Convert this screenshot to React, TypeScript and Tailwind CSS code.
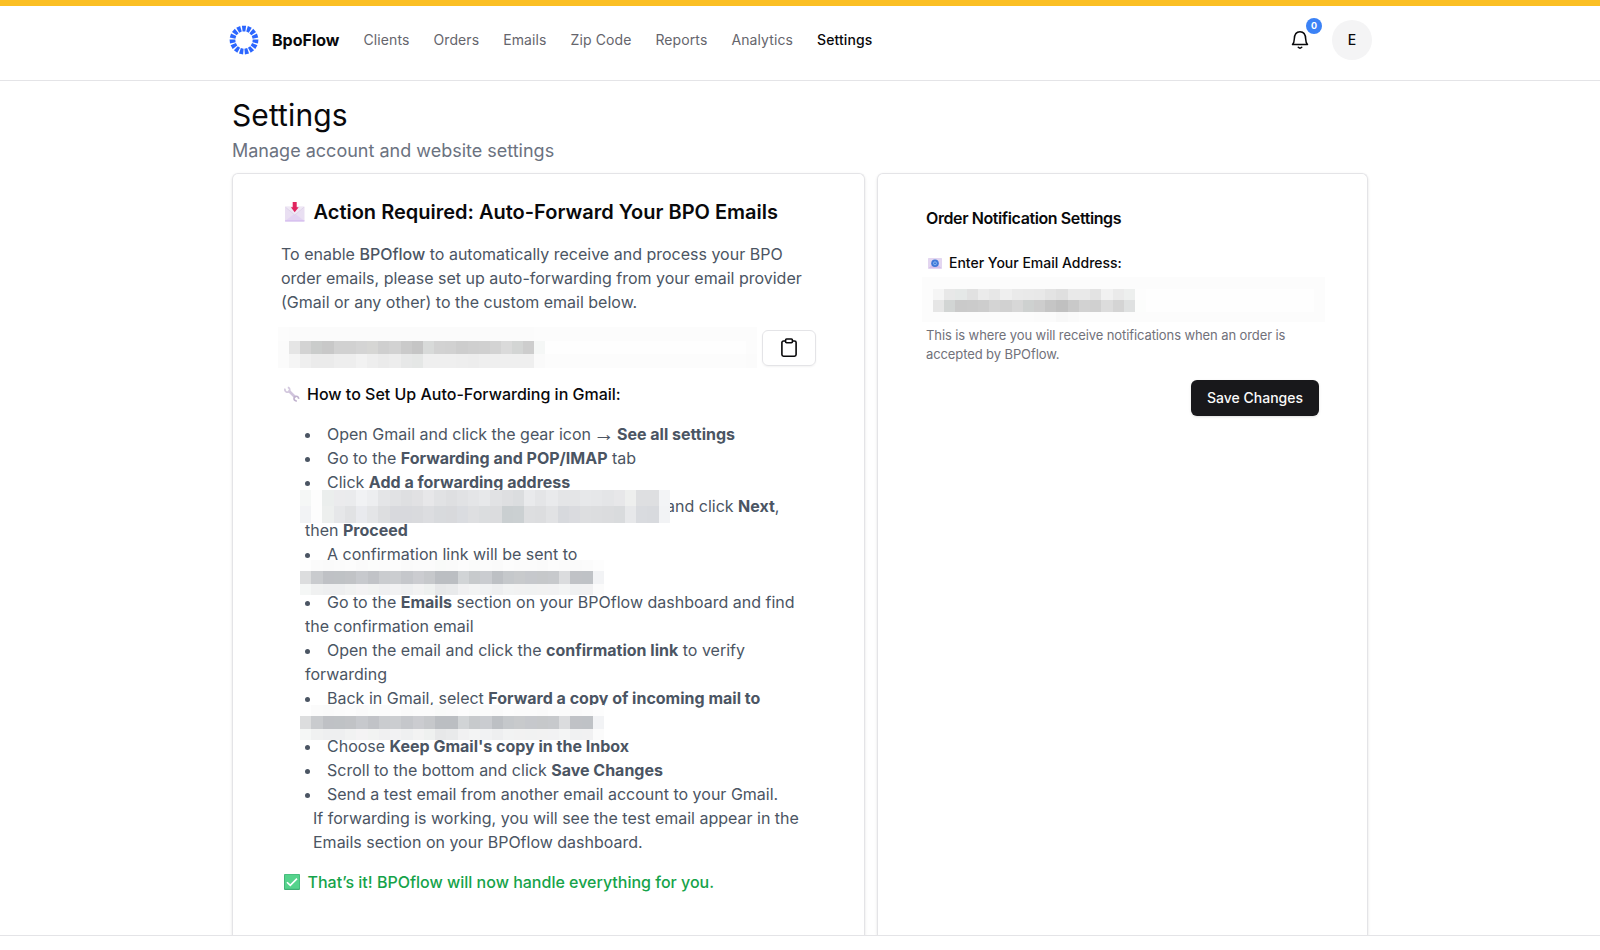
import React from "react";

type Cells = { w: number[]; rows: { h: number; c: string[] }[] };

function Mosaic({ data }: { data: Cells }) {
  return (
    <div className="flex flex-col" aria-hidden="true">
      {data.rows.map((r, i) => (
        <div key={i} className="flex" style={{ height: r.h }}>
          {r.c.map((c, j) => (
            <div key={j} className="shrink-0" style={{ width: data.w[j], backgroundColor: "#" + c }} />
          ))}
        </div>
      ))}
    </div>
  );
}

const fill = (n: number, v: number) => Array.from({ length: n }, () => v);

const forwardAddress: Cells = {
  w: [11, ...fill(22, 11.16), 11, 201, 11],
  rows: [
    { h: 14, c: ["fcfcfc", ...Array(22).fill("fbfbfb"), "fcfcfc", "fcfcfc", "fcfcfc"] },
    { h: 13, c: ["fbfbfb", "e5e5e5", "d3d3d3", "cacccb", "c8c8c8", "d1d1d1", "d1d1d1", "d4d4d4", "d6d6d4", "cfcfcf", "d2d2d2", "cacaca", "c5c5c5", "d8dad9", "d2d2d2", "d1d1d1", "cdcdcd", "cfcfcf", "d0d0d0", "d3d3d3", "dadada", "d3d5d4", "cdcdcd", "f5f7f6", "fefefe", "fcfcfc"] },
    { h: 14, c: ["fbfbfb", "f5f5f5", "efefef", "ebebeb", "ebebeb", "eeeeee", "eeeeee", "f2f2f2", "eeeeee", "ebebeb", "ededed", "e7e8e8", "e5e7e6", "efefef", "efefef", "efefef", "eeeeee", "ededed", "efefef", "efefef", "efefef", "efefef", "efefef", "fafafa", "fcfcfc", "fbfbfb"] },
  ],
};

const pasteAddress: Cells = {
  w: fill(33, 11.21),
  rows: [
    { h: 16, c: ["f5f7f6", "fdfdfd", "ebeeed", "ebebed", "eaebed", "f1f2f4", "edeef0", "e4e5e7", "e1e2e4", "dedfe1", "e1e1e3", "e7e7e9", "e1e2e4", "dedfe1", "e1e2e4", "e4e5e7", "e7e8ea", "e1e2e4", "dedfe1", "dbdddf", "e9eaec", "e4e5e7", "e9eaec", "e4e5e7", "e4e5e7", "e7e8ea", "e6e7e9", "e4e5e7", "e7e7e9", "eeefee", "dedfe1", "dedfe1", "f3f4f6"] },
    { h: 16.6, c: ["f2f3f5", "fdfdfd", "edefee", "e6e7e9", "e1e2e4", "e9eaee", "e4e5e7", "dddee0", "d8d9dd", "d8d9dd", "d9dadd", "dcdde0", "d8dadd", "d8d9dc", "dadce0", "dedfe1", "dbdddf", "dbdcde", "cacfd1", "cbd0d2", "dddee0", "dcdddf", "e1e2e4", "d7d9dd", "dadbdf", "dddee0", "dcdddf", "dbdcde", "d9dbdd", "e7e8ea", "d9dbdf", "d8dade", "f2f3f5"] },
  ],
};

const shortAddress: Cells = {
  w: fill(27, 11.28),
  rows: [
    { h: 11, c: ["fefefe", "fbfbfb", "fafafa", "fbfbfb", "fcfcfc", "fafafa", "fbfcfb", "fbfbfb", "fcfcfc", "fafafa", "fbfbfb", "fbfbfb", "f9faf9", "fafafa", "fcfcfc", "fafbfa", "fbfbfb", "fafafa", "fcfcfc", "fbfbfb", "fbfbfb", "fafafa", "fcfcfc", "fbfbfb", "fafafa", "fbfbfb", "fdfdfd"] },
    { h: 13, c: ["dcddde", "c9cbce", "bfc1c5", "bfc2c5", "c1c3c6", "c7c9cd", "c1c3c7", "cacccf", "cbcdd0", "c5c7cb", "cbccd0", "c6c8cb", "bbbec2", "bbbec2", "d1d4d6", "c7cacc", "caccd0", "bdc0c4", "c5c8cb", "c8cacc", "c6c8cc", "c6c8ca", "c7c9cc", "dbdcde", "c0c2c6", "bfc2c6", "f2f3f5"] },
    { h: 11, c: ["f5f7f6", "f0f1f1", "eeeff0", "eeeff0", "f1f2f2", "f4f3f4", "f2f3f2", "f0f0f1", "f2f2f3", "eff0f1", "f3f3f3", "eff1f0", "e7e8e9", "e9eaeb", "f1f1f2", "f3f4f4", "f1f2f3", "eeeff0", "f2f3f3", "f2f2f2", "f1f2f2", "f2f2f2", "f2f2f3", "f4f5f5", "f0f1f2", "f1f1f2", "fbfbfb"] },
  ],
};

const notifyAddress: Cells = {
  w: [11, ...fill(18, 11.22), 11, 168, 11],
  rows: [
    { h: 12, c: Array(22).fill("fcfcfc") },
    { h: 11, c: ["fcfcfc", "f5f5f5", "e8e8e8", "e5e8e7", "e1e1e1", "ebebeb", "e7e7e7", "efefef", "eaeaea", "e9e9e9", "e8e8e8", "e3e3e3", "dfdfdf", "e9e9e9", "e9e9e9", "e3e3e3", "f1f1f1", "eaeaea", "edefee", "fdfdfd", "fefefe", "fcfcfc"] },
    { h: 12, c: ["fcfcfc", "e6e6e6", "d2d5d4", "cacaca", "cbcbcb", "cdcdcd", "d4d4d4", "d1d1d1", "d7d7d7", "ced1d0", "cdcdcd", "c5c5c5", "c0c0c0", "c9c9c9", "d2d2d2", "d0d0d0", "dcdcdc", "d4d4d4", "dfe1e1", "fcfdfc", "fefefe", "fcfcfc"] },
    { h: 10, c: ["fcfcfc", "fcfcfc", "fcfcfc", "fcfcfc", "fcfcfc", "fcfcfc", "fcfcfc", "fcfcfc", "fcfcfc", "fcfcfc", "fbfbfb", "fbfbfb", "f8f8f8", "fafafa", "fcfcfc", "fcfcfc", "fcfcfc", "fcfcfc", "fcfcfc", "fcfcfc", "fcfcfc", "fcfcfc"] },
  ],
};

function Logo() {
  return (
    <svg width="30" height="30" viewBox="-15 -15 30 30">
      {Array.from({ length: 15 }, (_, i) => (
        <path key={i} d="M-2.1-14.3H2.1L1.4-8.6H-1.4Z" fill="#2b66ff" transform={`rotate(${i * 24})`} />
      ))}
    </svg>
  );
}

function InboxEmoji() {
  return (
    <svg width="20" height="20" viewBox="0 0 20 20" className="shrink-0">
      <rect x="0" y="4.5" width="19.5" height="15" rx="1" fill="#e9dff2" />
      <path d="M0 19l9.8-7.5L19.5 19z" fill="#e2d3f2" />
      <path d="M.3 5l9.5 8 9.4-8" fill="#efe8f5" stroke="#d8cbe4" strokeWidth=".6" />
      <path d="M0 18.4h19.5v1.1H0z" fill="#d3b8ee" />
      <path d="M7.7 0h4v5.3h2L9.7 10.2 5.9 5.3h1.8z" fill="#e0245e" />
    </svg>
  );
}

function WrenchEmoji() {
  return (
    <svg width="16" height="16" viewBox="0 0 16 16" className="shrink-0">
      <path d="M4.5 4.5l7 7" stroke="#d0c4dc" strokeWidth="2.7" />
      <path d="M1.2 2.6A2.4 2.4 0 1 0 3.8 1.4" fill="none" stroke="#d3c8de" strokeWidth="1.7" />
      <path d="M14.6 12.8a2.3 2.3 0 1 0-1.8 2" fill="none" stroke="#c0b2ce" strokeWidth="1.7" />
    </svg>
  );
}

function MailEmoji() {
  return (
    <svg width="14" height="11" viewBox="0 0 14 11" className="shrink-0">
      <rect width="14" height="10.5" rx=".6" fill="#e3d6f0" />
      <path d="M0 10.5L5 6h4l5 4.5z" fill="#d5c0ea" />
      <circle cx="7" cy="5.3" r="3.8" fill="#3f79d8" />
      <circle cx="7" cy="5.3" r="1.5" fill="none" stroke="#9cc4f5" strokeWidth=".8" />
    </svg>
  );
}

function CheckEmoji() {
  return (
    <svg width="16" height="16" viewBox="0 0 16 16" className="shrink-0">
      <rect width="16" height="16" rx="1" fill="#3fae74" />
      <rect x=".8" y=".6" width="14.6" height="14.2" rx=".6" fill="#55d38c" />
      <path d="M3 8.2l3.3 3.2L13 4.6" fill="none" stroke="#fff" strokeWidth="1.6" />
    </svg>
  );
}

const links = ["Clients", "Orders", "Emails", "Zip Code", "Reports", "Analytics"];

export default function App() {
  return (
    <div className="flex h-[950px] w-full flex-col overflow-hidden bg-white font-['Inter',sans-serif] text-[#09090b]">
      <div className="h-1.5 shrink-0 bg-[#fbbf24]" />
      <header className="h-[75px] shrink-0 border-b border-[#e4e4e7]">
        <div className="mx-auto flex w-[1144px] items-center pt-[14px]">
          <div className="ml-px flex items-center gap-[13px]">
            <Logo />
            <span className="w-[68px] text-base font-bold whitespace-nowrap">BpoFlow</span>
          </div>
          <nav className="ml-[23.5px] flex gap-6 text-sm tracking-[0.1px] whitespace-nowrap text-[#65656c]">
            {links.map((l) => (
              <a key={l}>{l}</a>
            ))}
            <a className="font-medium text-[#09090b]">Settings</a>
          </nav>
          <div className="ml-auto flex items-center gap-[23px]">
            <div className="relative">
              <svg width="18" height="20" viewBox="0 0 18 20" fill="none" stroke="#09090b" strokeWidth="1.5" strokeLinecap="round" strokeLinejoin="round">
                <path d="M1.5 14.6h15c-1.4-1.3-1.7-2.6-1.8-5.5-.1-4.6-1.8-7.4-5.7-7.4S3.4 4.5 3.3 9.1c-.1 2.9-.4 4.2-1.8 5.5z" />
                <path d="M7.3 17.3c.9.9 2.5.9 3.4 0" />
              </svg>
              <span className="absolute -top-[12px] left-[15px] flex size-4 items-center justify-center rounded-full bg-[#3b82f6] text-[9px] font-bold text-white">0</span>
            </div>
            <div className="flex size-10 items-center justify-center rounded-full bg-[#f4f4f5] text-sm font-medium">E</div>
          </div>
        </div>
      </header>

      <main className="mx-auto flex h-[854px] w-[1136px] shrink-0 flex-col overflow-visible pt-4">
        <h1 className="text-[30px] leading-9 tracking-[0.1px]">Settings</h1>
        <p className="mt-1 text-lg leading-7 text-[#6b7280]">Manage account and website settings</p>
        <div className="mt-2 flex flex-1 gap-3">
          <section className="w-[633px] rounded-t-md border border-b-0 border-[#e4e4e7] pt-6 pr-12 pl-12 shadow-sm">
            <h2 className="flex h-7 items-center gap-[9px] pl-[3.5px] text-xl font-semibold whitespace-nowrap">
              <InboxEmoji />
              Action Required: Auto-Forward Your BPO Emails
            </h2>
            <p className="mt-4 text-base leading-6 text-[#4b5563]">
              To enable <b className="font-medium">BPOflow</b> to automatically receive and process your BPO
              <br />
              order emails, please set up auto-forwarding from your email provider
              <br />
              (Gmail or any other) to the custom email below.
            </p>
            <div className="relative mt-4 flex justify-end">
              <div className="absolute top-[-3px] left-[-3px]">
                <Mosaic data={forwardAddress} />
              </div>
              <button className="flex h-9 w-[54px] items-center justify-center rounded-md border border-[#e4e4e7] shadow-xs">
                <svg width="16" height="20" viewBox="0 0 16 20" fill="none" stroke="#09090b" strokeWidth="1.6" strokeLinejoin="round">
                  <path d="M4.6 3H2.5A1.6 1.6 0 0 0 .9 4.6v12a1.6 1.6 0 0 0 1.6 1.6h11a1.6 1.6 0 0 0 1.6-1.6v-12A1.6 1.6 0 0 0 13.5 3h-2.1" />
                  <rect x="4.6" y="1" width="6.8" height="3.7" rx="1" />
                </svg>
              </button>
            </div>
            <h3 className="mt-4 flex h-6 items-center gap-[7px] pl-[3px] text-base font-medium whitespace-nowrap">
              <WrenchEmoji />
              How to Set Up Auto-Forwarding in Gmail:
            </h3>
            <div className="relative mt-4 pl-6 text-base leading-6 whitespace-nowrap text-[#4b5563]">
              <ul className="list-inside list-disc">
                <li>Open Gmail and click the gear icon <span className="inline-flex h-6 w-[17px] items-center justify-center align-top font-['Liberation_Sans',sans-serif] text-[21px] leading-6">→</span> <b className="font-bold">See all settings</b></li>
                <li>Go to the <b className="font-bold">Forwarding and POP/IMAP</b> tab</li>
                <li>Click <b className="font-bold">Add a forwarding address</b></li>
                <li>
                  <span className="inline-block w-[339px]" />and click <b className="font-bold">Next</b>,<br />then <b className="font-bold">Proceed</b>
                </li>
                <li>A confirmation link will be sent to<br />&nbsp;</li>
                <li>Go to the <b className="font-bold">Emails</b> section on your BPOflow dashboard and find<br />the confirmation email</li>
                <li>Open the email and click the <b className="font-bold">confirmation link</b> to verify<br />forwarding</li>
                <li>Back in Gmail, select <b className="font-bold">Forward a copy of incoming mail to</b><br />&nbsp;</li>
                <li>Choose <b className="font-bold">Keep Gmail's copy in the Inbox</b></li>
                <li>Scroll to the bottom and click <b className="font-bold">Save Changes</b></li>
                <li>Send a test email from another email account to your Gmail.</li>
              </ul>
              <p className="pl-2">
                If forwarding is working, you will see the test email appear in the
                <br />
                Emails section on your BPOflow dashboard.
              </p>
              <div className="absolute top-[68px] left-[19px]">
                <Mosaic data={pasteAddress} />
              </div>
              <div className="absolute top-[138px] left-[19px]">
                <Mosaic data={shortAddress} />
              </div>
              <div className="absolute top-[283px] left-[19px]">
                <Mosaic data={shortAddress} />
              </div>
            </div>
            <p className="mt-4 flex h-6 items-center gap-[7.5px] pl-[3px] text-base font-medium whitespace-nowrap text-[#16a34a]">
              <CheckEmoji />
              That’s it! BPOflow will now handle everything for you.
            </p>
          </section>

          <section className="flex w-[491px] flex-col rounded-t-md border border-b-0 border-[#e4e4e7] px-12 pt-8 shadow-sm">
            <h2 className="text-base leading-6 font-semibold tracking-[-0.4px]">Order Notification Settings</h2>
            <div className="mt-[23px] flex h-5 items-center gap-[7px] pl-[2px] text-sm font-medium">
              <MailEmoji />
              Enter Your Email Address:
            </div>
            <div className="relative h-[51px]">
              <div className="absolute top-[4px] left-[-4px]">
                <Mosaic data={notifyAddress} />
              </div>
            </div>
            <p className="mt-0.5 text-[13px] leading-[19px] tracking-[-0.1px] text-[#71717a]">
              This is where you will receive notifications when an order is
              <br />
              accepted by BPOflow.
            </p>
            <button className="mt-4 h-9 w-32 self-end rounded-md bg-[#18181b] text-sm font-medium text-[#fafafa] shadow-sm">Save Changes</button>
          </section>
        </div>
      </main>
      <footer className="relative h-[15px] shrink-0 border-t border-[#e4e4e7] bg-white" />
    </div>
  );
}
